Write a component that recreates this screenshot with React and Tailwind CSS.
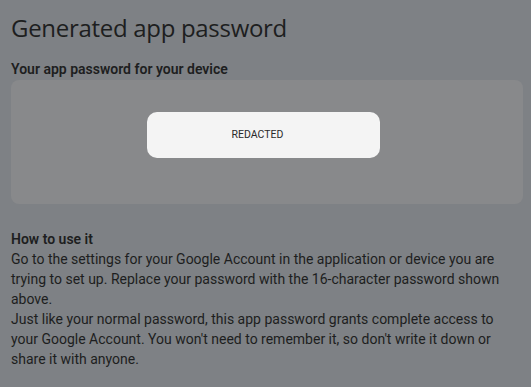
import React from "react";

const App = () => {
  return (
    <div
      className="w-[531px] h-[387px] overflow-hidden bg-[#7e8185] text-[#1d1e20] px-[11px]"
      style={{ fontFamily: "Roboto, sans-serif" }}
    >
      <h1
        className="pt-[11px] text-[24px] leading-[34px] tracking-[-0.3px]"
        style={{ fontFamily: '"Open Sans", sans-serif' }}
      >
        Generated app password
      </h1>
      <h2 className="mt-[14px] text-[14px] leading-[20px] font-semibold">Your app password for your device</h2>
      {/* Password panel */}
      <div className="mt-[1px] h-[124px] w-[512px] rounded-[8px] bg-[#88898b] pt-[32px] pl-[136px]">
        <div className="w-[233px] h-[46px] rounded-[10px] bg-[#f4f4f4] flex items-center justify-center pr-[12px]">
          <span className="text-[10.5px] text-[#2a2a2a]">REDACTED</span>
        </div>
      </div>
      <div className="mt-[25px] text-[14px] leading-[20px]">
        <div className="font-semibold">How to use it</div>
        <p>
          Go to the settings for your Google Account in the application or device you are trying to set up. Replace your
          password with the 16-character password shown above.
        </p>
        <p>
          Just like your normal password, this app password grants complete access to your Google Account. You won't need
          to remember it, so don't write it down or share it with anyone.
        </p>
      </div>
    </div>
  );
};

export default App;
